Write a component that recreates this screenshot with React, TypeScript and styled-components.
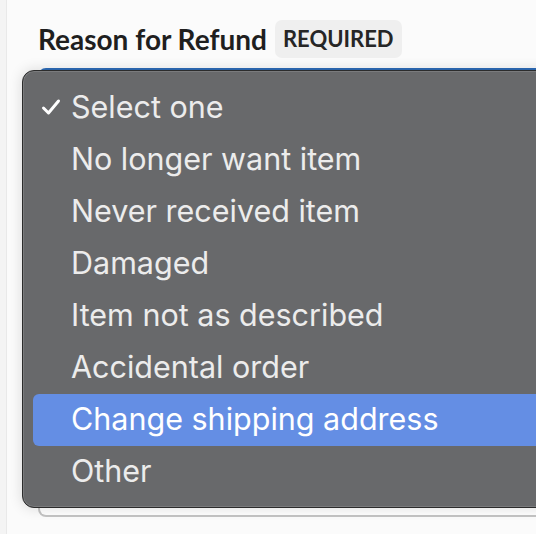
import React from 'react';
import styled, {createGlobalStyle} from "styled-components";

const options = [
    "Select one",
    "No longer want item",
    "Never received item",
    "Damaged",
    "Item not as described",
    "Accidental order",
    "Change shipping address",
    "Other",
];

const selected = 0;
const highlighted = 6;

function CheckIcon(): JSX.Element {
    return (
        <svg width="22" height="18" viewBox="0 0 22 18">
            <path d="M3.5 10 L8.5 15 L18.5 3" fill="none" stroke="#fff" strokeWidth="3"
                  strokeLinecap="round" strokeLinejoin="round"/>
        </svg>
    );
}

function App(): JSX.Element {
    return (
        <>
            <GlobalStyle/>
            <Page>
                <Panel>
                    <Field>
                        <LabelRow>
                            <Label>Reason for Refund</Label>
                            <Badge>REQUIRED</Badge>
                        </LabelRow>
                        <SelectBox/>
                    </Field>
                    <Menu>
                        {options.map((o, i) => (
                            <Item key={o} active={i === highlighted}>
                                <Check>{i === selected && <CheckIcon/>}</Check>
                                {o}
                            </Item>
                        ))}
                    </Menu>
                </Panel>
            </Page>
        </>
    );
}

const GlobalStyle = createGlobalStyle`
  html, body {
    margin: 0;
    background: #f4f4f4;
    overflow: hidden;
  }
`;

const Page = styled.div`
  width: 536px;
  height: 534px;
  padding-left: 6px;
  box-sizing: border-box;
  background: #f4f4f4;
`;

const Panel = styled.div`
  position: relative;
  height: 100%;
  background: #fbfbfb;
  border-left: 1px solid #e9e9e9;
  overflow: hidden;
`;

const Field = styled.div`
  padding: 20px 0 0 31px;
`;

const LabelRow = styled.div`
  display: flex;
  align-items: center;
  gap: 8px;
  height: 38px;
`;

const Label = styled.span`
  font-family: Lato, sans-serif;
  font-weight: 700;
  font-size: 28px;
  color: #1f1f1f;
`;

const Badge = styled.span`
  font-family: Lato, sans-serif;
  font-weight: 700;
  font-size: 22px;
  color: #262626;
  background: #efefef;
  border-radius: 7px;
  padding: 7px 8px;
  line-height: 24px;
`;

const SelectBox = styled.div`
  margin-top: 10px;
  height: 445px;
  margin-right: -20px;
  border: 2px solid #c4c4c4;
  border-top-color: #2d6cb8;
  border-radius: 8px;
  background: #fff;
`;

const Menu = styled.div`
  position: absolute;
  left: 15px;
  top: 70px;
  right: -30px;
  padding: 11px 0 9px;
  background: #68696b;
  border: 1px solid #2c2c2c;
  border-radius: 12px;
  box-shadow: 0 0 14px rgba(0, 0, 0, 0.14), inset 0 0 0 1px rgba(255, 255, 255, 0.12);
`;

const Item = styled.div<{ active: boolean }>`
  display: flex;
  align-items: center;
  height: 52px;
  box-sizing: border-box;
  padding-bottom: 3px;
  margin: 0 0 0 10px;
  border-radius: 6px;
  background: ${p => p.active ? "#648ee4" : "transparent"};
  color: ${p => p.active ? "#ffffff" : "#ececec"};
  font-family: Inter, "Noto Sans", sans-serif;
  font-size: 30.5px;
`;

const Check = styled.span`
  display: flex;
  align-items: center;
  width: 38px;
  padding-left: 7px;
  box-sizing: border-box;
`;

export default App;
